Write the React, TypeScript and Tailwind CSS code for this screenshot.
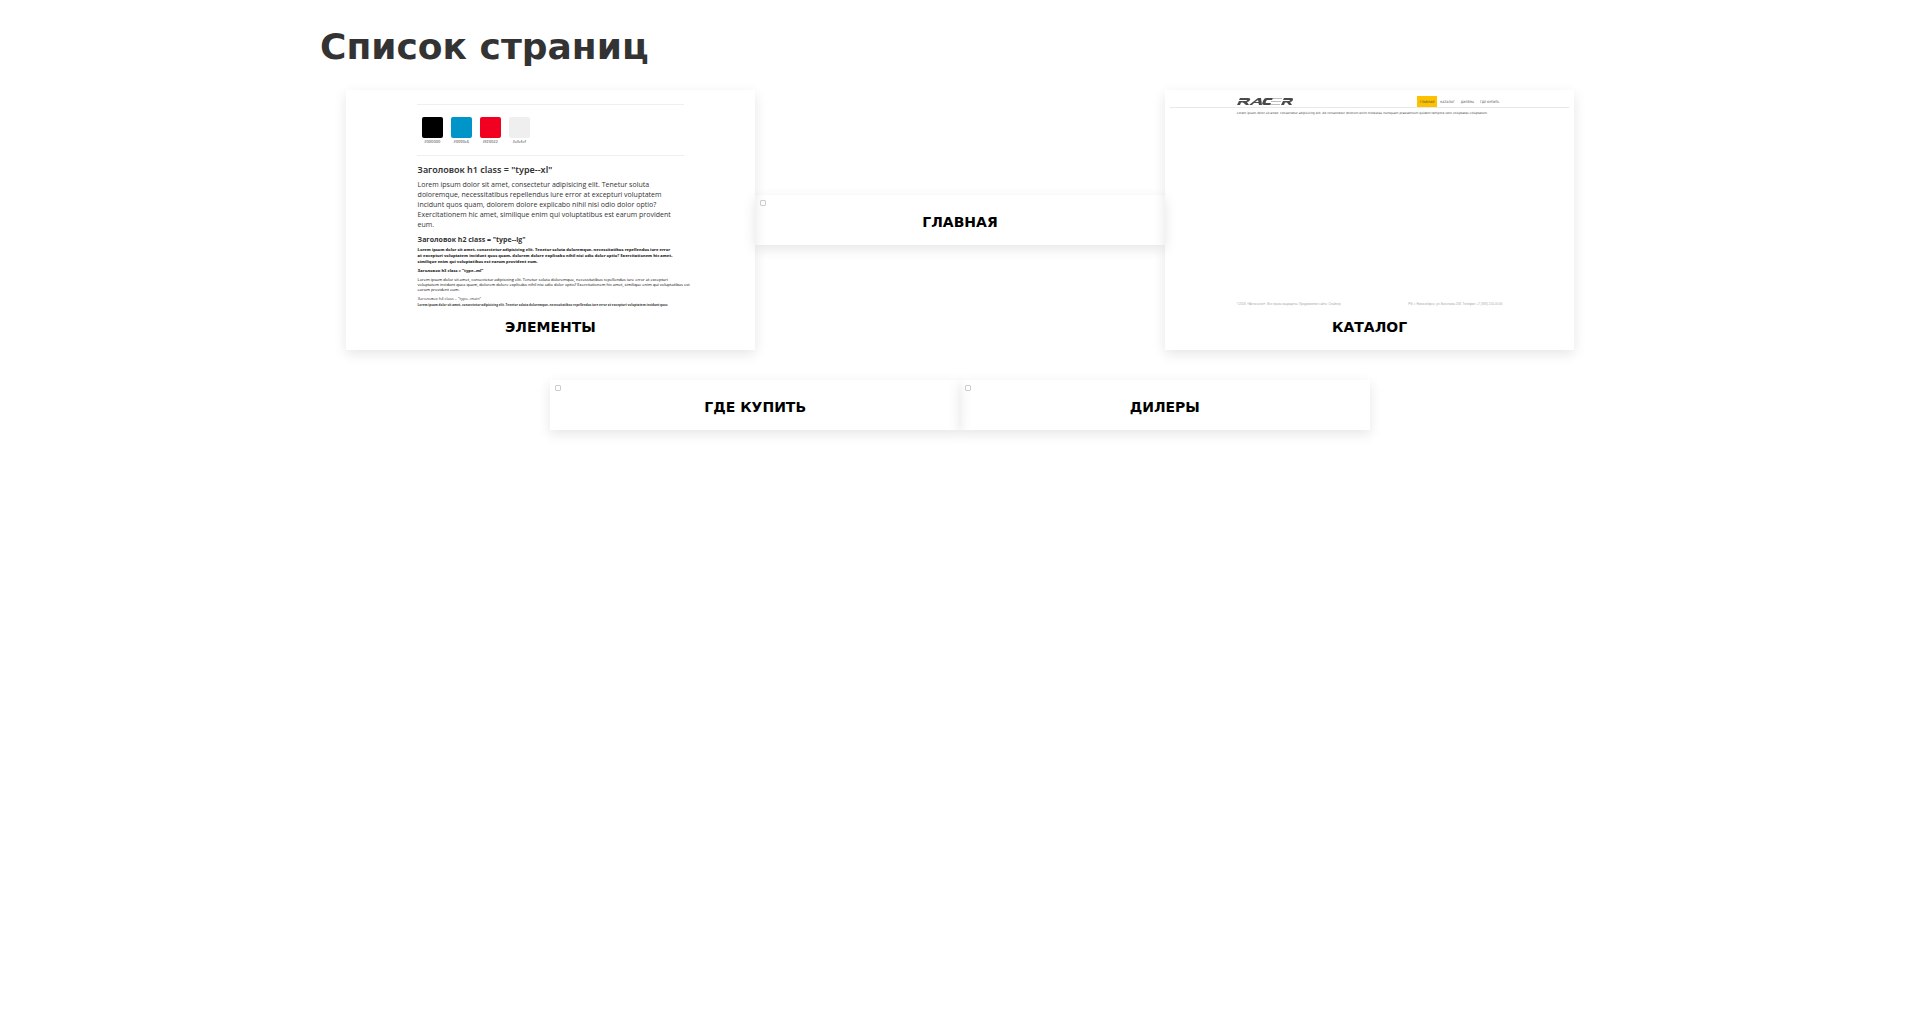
import React from "react";

const swatches = [
  { code: "#000000", color: "bg-black" },
  { code: "#0093c6", color: "bg-[#0095c9]" },
  { code: "#f20022", color: "bg-[#f20022]" },
  { code: "#efefef", color: "bg-[#efefef]" },
];

const extraLarge = [
  "Lorem ipsum dolor sit amet, consectetur adipisicing elit. Tenetur soluta",
  "doloremque, necessitatibus repellendus iure error at excepturi voluptatem",
  "incidunt quos quam, dolorem dolore explicabo nihil nisi odio dolor optio?",
  "Exercitationem hic amet, similique enim qui voluptatibus est earum provident",
  "eum.",
];

const large = [
  "Lorem ipsum dolor sit amet, consectetur adipisicing elit. Tenetur soluta doloremque, necessitatibus repellendus iure error",
  "at excepturi voluptatem incidunt quos quam, dolorem dolore explicabo nihil nisi odio dolor optio? Exercitationem hic amet,",
  "similique enim qui voluptatibus est earum provident eum.",
];

const medium = [
  "Lorem ipsum dolor sit amet, consectetur adipisicing elit. Tenetur soluta doloremque, necessitatibus repellendus iure error at excepturi",
  "voluptatem incidunt quos quam, dolorem dolore explicabo nihil nisi odio dolor optio? Exercitationem hic amet, similique enim qui voluptatibus est",
  "earum provident eum.",
];

const main = [
  "Lorem ipsum dolor sit amet, consectetur adipisicing elit. Tenetur soluta doloremque, necessitatibus repellendus iure error at excepturi voluptatem incidunt quos",
];

function Lines({ lines, className }: { lines: string[]; className: string }) {
  return (
    <p className={`whitespace-nowrap ${className}`}>
      {lines.map((line) => (
        <span key={line} className="block">
          {line}
        </span>
      ))}
    </p>
  );
}

function ElementsPreview() {
  return (
    <div className="h-[216px] overflow-hidden px-[66px] pt-[9px] font-['Open_Sans',sans-serif] text-[#333]">
      <div className="flex h-[52px] gap-2 border-y border-[#efefef] px-[5px] pt-3">
        {swatches.map((s) => (
          <div key={s.code} className="flex w-[21px] flex-col items-center gap-[2px]">
            <div className={`size-[21px] rounded-[2px] ${s.color}`} />
            <span className="text-[4px] leading-[4px]">{s.code}</span>
          </div>
        ))}
      </div>
      <div className="px-px pt-[9px]">
        <p className="font-['Noto_Sans',sans-serif] text-[9px] leading-[10px] font-semibold">
          Заголовок h1 class = "type--xl"
        </p>
        <Lines lines={extraLarge} className="mt-[5px] text-[7px] leading-[10px]" />
        <p className="mt-[5px] text-[7px] leading-[10px] font-bold">Заголовок h2 class = "type--lg"</p>
        <Lines lines={large} className="mt-[2px] text-[4px] leading-[6px] font-extrabold" />
        <p className="mt-[3px] text-[4px] leading-[6px] font-extrabold">Заголовок h3 class = "type--ml"</p>
        <Lines lines={medium} className="mt-[3px] text-[4px] leading-[5px] font-medium text-black" />
        <p className="mt-1 text-[4px] leading-[5px]">Заголовок h4 class = "type--main"</p>
        <Lines lines={main} className="mt-[2px] text-[3px] leading-[5px] font-extrabold text-[#555]" />
      </div>
    </div>
  );
}

function RacerLogo() {
  return (
    <svg className="mb-[2px] h-[7px] w-[56px]" viewBox="0 0 56 7" fill="#4a4a4a" aria-label="Racer">
      <path d="M3 0H11Q14 0 13 2Q12 4 10 4L12 7H9L6 4.500H4L3 7H0L2 3H9Q10 3 10 2H2Z" />
      <path d="M21 0H24L25 7H22L21.500 5H17L15 7H12ZM21 2L18 4H21.500Z" />
      <path d="M29 0H36L35 2H30Q28 4 29 5H34L33 7H27Q24 7 26 3Q27 0 29 0Z" />
      <path d="M36 0H45V.5H36ZM34 3.200H44V3.700H34ZM33 6.500H43V7H33Z" opacity=".7" />
      <path d="M47 0H54Q57 0 56 2Q55 4 53 4L55 7H52L50 4.500H48L47 7H44L46 3H52Q53 3 53 2H46Z" />
    </svg>
  );
}

function CatalogPreview() {
  return (
    <div className="flex h-[216px] flex-col pt-px text-[3px] leading-[4px] text-[#444]">
      <div className="flex h-[12px] items-end justify-between border-b border-[#e8e8e8] px-[67px]">
        <RacerLogo />
        <div className="flex h-full">
          <span className="bg-[#fdc100] px-[3px] pt-1">ГЛАВНАЯ</span>
          <span className="px-[3px] pt-1">КАТАЛОГ</span>
          <span className="px-[3px] pt-1">ДИЛЕРЫ</span>
          <span className="px-[3px] pt-1">ГДЕ КУПИТЬ</span>
        </div>
      </div>
      <p className="mt-[3px] px-[67px] whitespace-nowrap">
        Lorem ipsum dolor sit amet, consectetur adipisicing elit. Ad consectetur dolorum enim molestias numquam
        praesentium quidem tempore vero voluptates voluptatum.
      </p>
      <div className="mt-auto mb-[5px] flex justify-between px-[67px] font-['Liberation_Sans',sans-serif] text-[#aaa]">
        <span>©2018, «Автосалон». Все права защищены. Продвижение сайта: Снайпер</span>
        <span>РФ, г. Новосибирск, ул. Богаткова 208. Телефон: +7 (383) 214-00-60</span>
      </div>
    </div>
  );
}

function MissingPreview() {
  return (
    <svg className="size-[6px]" viewBox="0 0 6 6" fill="none" stroke="#ccc" aria-hidden="true">
      <path d="M1 .5H5V1H5.500V5H5V5.500H1V5H.5V1H1Z" />
    </svg>
  );
}

const pages = [
  { title: "Элементы", preview: <ElementsPreview /> },
  { title: "Главная", preview: <MissingPreview /> },
  { title: "Каталог", preview: <CatalogPreview /> },
  { title: "Где купить", preview: <MissingPreview /> },
  { title: "Дилеры", preview: <MissingPreview /> },
];

export default function App() {
  return (
    <main className="mx-auto min-h-screen max-w-[1280px] pt-[20px] font-['DejaVu_Sans',sans-serif]">
      <h1 className="text-[36px] leading-[54px] font-bold text-[#333]">Список страниц</h1>
      <nav className="mt-4 flex flex-wrap items-center justify-center gap-y-[30px]">
        {pages.map((page) => (
          <a key={page.title} href="#" className="block w-[32%] p-[5px] shadow-[0_4px_12px_rgba(0,0,0,0.1)]">
            {page.preview}
            <span className="block pt-[6px] pb-2 text-center text-[14px] leading-[20px] font-bold text-black uppercase">
              {page.title}
            </span>
          </a>
        ))}
      </nav>
    </main>
  );
}
